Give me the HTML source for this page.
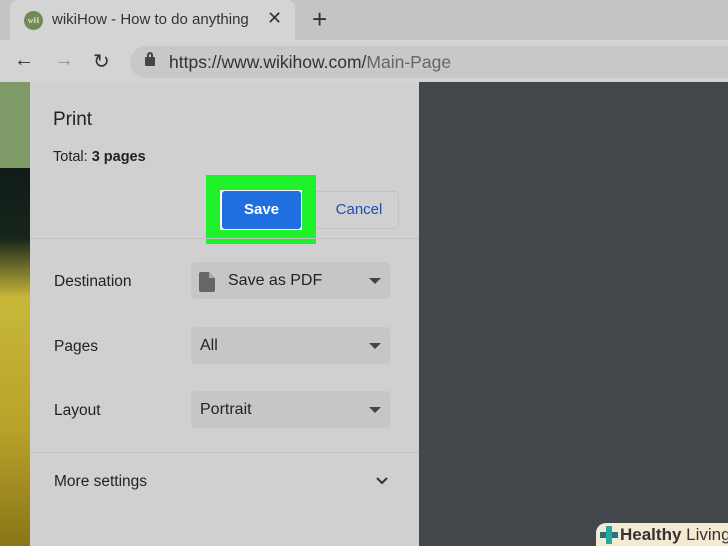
<!DOCTYPE html>
<html><head><style>
*{margin:0;padding:0;box-sizing:border-box}
html,body{width:728px;height:546px;overflow:hidden}
body{position:relative;background:#43464a;font-family:"Liberation Sans",sans-serif;color:#222}
.abs{position:absolute;white-space:nowrap}
.dd{position:absolute;left:191px;width:199px;height:37px;background:#c6c6c6;border-radius:4px;font-size:16px;line-height:37px}
.dd .arr{position:absolute;right:9px;top:16px;width:0;height:0;border-left:6px solid transparent;border-right:6px solid transparent;border-top:6px solid #444}
.lbl{position:absolute;left:54px;font-size:15.5px}
</style></head><body>
<div class="abs" style="left:0;top:0;width:728px;height:40px;background:#c4c4c4"></div>
<div class="abs" style="left:10px;top:0;width:285px;height:42px;background:#d4d4d4;border-radius:8px 8px 0 0"></div>
<div class="abs" style="left:24px;top:11px;width:19px;height:19px;border-radius:50%;background:#6f8b55;color:#fff;font-size:8px;line-height:19px;text-align:center;font-family:'Liberation Serif',serif">wH</div>
<div class="abs" style="left:52px;top:11px;font-size:15px;color:#333">wikiHow - How to do anything</div>
<div class="abs" style="left:267px;top:8px;font-size:18px;color:#333">✕</div>
<div class="abs" style="left:312px;top:4px;font-size:26px;color:#333">+</div>
<div class="abs" style="left:0;top:40px;width:728px;height:42px;background:#d4d4d4"></div>
<div class="abs" style="left:14px;top:49px;font-size:20px;color:#333">←</div>
<div class="abs" style="left:54px;top:49px;font-size:20px;color:#999">→</div>
<div class="abs" style="left:93px;top:49px;font-size:20px;color:#333">↻</div>
<div class="abs" style="left:130px;top:46px;width:598px;height:32px;background:#c8c8c8;border-radius:16px 0 0 16px"></div>
<div class="abs" style="left:145px;top:57px;width:10px;height:9px;background:#444;border-radius:1px"></div>
<div class="abs" style="left:147px;top:52px;width:6px;height:7px;border:2px solid #444;border-bottom:none;border-radius:3px 3px 0 0"></div>
<div class="abs" style="left:169px;top:52px;font-size:17.5px;color:#333">https://www.wikihow.com/<span style="color:#666">Main-Page</span></div>
<div class="abs" style="left:0;top:82px;width:30px;height:86px;background:#7f9a66"></div>
<div class="abs" style="left:0;top:168px;width:30px;height:378px;background:linear-gradient(#0f1c18 0,#18251b 70px,#c8b83a 130px,#b9a22a 260px,#8a7518 378px)"></div>
<div class="abs" style="left:30px;top:82px;width:389px;height:464px;background:#d0d0d0"></div>
<div class="abs" style="left:53px;top:109px;font-size:19px">Print</div>
<div class="abs" style="left:53px;top:149px;font-size:14.5px">Total: <b>3 pages</b></div>
<div class="abs" style="left:206px;top:175px;width:110px;height:69px;background:#1ff22a"></div>
<div class="abs" style="left:220px;top:190px;width:82px;height:40px;background:#fff"></div>
<div class="abs" style="left:222px;top:191px;width:79px;height:38px;background:#1f6fe0;border-radius:3px;color:#fff;font-weight:bold;font-size:15px;line-height:38px;text-align:center">Save</div>
<div class="abs" style="left:316px;top:191px;width:83px;height:38px;border:1px solid #c2c2c2;border-left:none;border-radius:0 4px 4px 0;color:#1d50b5;font-size:15px;line-height:36px;text-align:center;padding-left:4px">Cancel</div>
<div class="abs" style="left:30px;top:238px;width:389px;height:1px;background:#c2c2c2"></div>
<div class="lbl" style="top:273px">Destination</div>
<div class="dd" style="top:262px"><svg class="abs" style="left:8px;top:10px" width="16" height="20"><path d="M0 2Q0 0 2 0H10L16 6V18Q16 20 14 20H2Q0 20 0 18Z" fill="#666"/><path d="M10 0V6H16" fill="#aaa"/></svg><span style="position:absolute;left:37px">Save as PDF</span><div class="arr"></div></div>
<div class="lbl" style="top:338px">Pages</div>
<div class="dd" style="top:327px"><span style="position:absolute;left:9px">All</span><div class="arr"></div></div>
<div class="lbl" style="top:402px">Layout</div>
<div class="dd" style="top:391px"><span style="position:absolute;left:9px">Portrait</span><div class="arr"></div></div>
<div class="abs" style="left:30px;top:452px;width:389px;height:1px;background:#c2c2c2"></div>
<div class="lbl" style="top:473px">More settings</div>
<svg class="abs" style="left:376px;top:477px" width="12" height="8"><path d="M1 1L6 6L11 1" stroke="#333" stroke-width="2" fill="none"/></svg>
<div class="abs" style="left:596px;top:523px;width:132px;height:23px;background:#f4ead2;border-radius:10px 0 0 0"></div>
<div class="abs" style="left:600px;top:526px;width:18px;height:18px;background:linear-gradient(#2aa6a0,#2aa6a0) center/6px 18px no-repeat,linear-gradient(#2a6f80,#2a6f80) center/18px 6px no-repeat"></div>
<div class="abs" style="left:620px;top:525px;font-size:17px;color:#333"><b>Healthy</b> Living</div>
</body></html>
